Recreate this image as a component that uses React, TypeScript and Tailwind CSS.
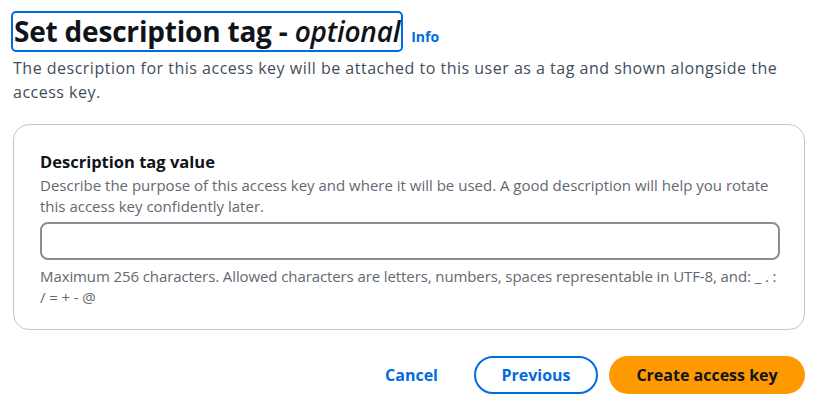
import React from "react";

export default function App() {
  return (
    <div className="w-[815px] h-[406px] bg-white overflow-hidden pl-[13px] pr-[10px] pt-[11px]" style={{ fontFamily: '"Open Sans", "Noto Sans", sans-serif' }}>
      <div className="flex items-end ml-[-2px]">
        <h2 className="border-2 border-[#006ce0] rounded-[5px] px-[1px] text-[28px] leading-[37px] font-bold text-[#0f141a] tracking-[-0.2px]">
          Set description tag - <span className="italic font-semibold">optional</span>
        </h2>
        <a className="ml-[8px] mb-[6px] text-[14px] leading-[18px] font-bold text-[#006ce0]">Info</a>
      </div>
      <p className="mt-[4px] text-[16px] leading-[24px] text-[#414d5c] tracking-[0.5px]">
        The description for this access key will be attached to this user as a tag and shown alongside the access key.
      </p>
      <div className="mt-[20px] w-[792px] h-[206px] border border-[#c6c6cd] rounded-[16px] px-[26px] pt-[25px]">
        <div className="text-[16.5px] leading-[24px] font-bold text-[#0f141a]">Description tag value</div>
        <div className="mt-[1px] text-[15px] leading-[21px] text-[#656871]">
          Describe the purpose of this access key and where it will be used. A good description will help you rotate this access key confidently later.
        </div>
        <input className="mt-[5px] block w-[740px] h-[38px] border-2 border-[#8c8c94] rounded-[8px] outline-none" />
        <div className="mt-[6px] text-[15px] leading-[21px] text-[#656871] tracking-[-0.1px]">
          Maximum 256 characters. Allowed characters are letters, numbers, spaces representable in UTF-8, and: _ . : / = + - @
        </div>
      </div>
      <div className="mt-[26px] flex justify-end items-center">
        <button className="mr-[36px] text-[16px] font-bold text-[#006ce0]">Cancel</button>
        <button className="w-[124px] h-[38px] rounded-full border-2 border-[#006ce0] text-[16px] font-bold text-[#006ce0]">Previous</button>
        <button className="ml-[11px] w-[196px] h-[38px] rounded-full bg-[#ff9900] text-[16px] font-bold text-[#0f141a]">Create access key</button>
      </div>
    </div>
  );
}
